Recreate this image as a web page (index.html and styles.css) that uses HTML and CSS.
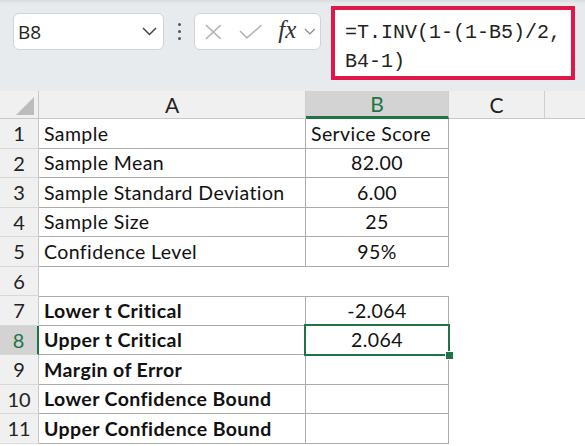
FILE: index.html
```html
<!DOCTYPE html>
<html lang="en">

<head>
    <meta charset="UTF-8">
    <meta name="viewport" content="width=device-width, initial-scale=1.0">
    <title>T.INV critical values</title>
    <link rel="stylesheet" href="styles.css">
</head>

<body>
    <div id="toolbar">
        <div id="name-box">
            <span>B8</span>
            <svg class="chev" width="15" height="9" viewBox="0 0 15 9"><path d="M1 1 L7.5 7.5 L14 1" fill="none" stroke="#444" stroke-width="1.5"/></svg>
        </div>
        <div id="dots"><i></i><i></i><i></i></div>
        <div id="fx-box">
            <svg width="18" height="16" viewBox="0 0 18 16"><path d="M1 1 L16 15 M16 1 L1 15" stroke="#b5b5b5" stroke-width="1.5" fill="none"/></svg>
            <svg width="24" height="15" viewBox="0 0 24 15"><path d="M1 7 L8 14 L23 1" stroke="#b5b5b5" stroke-width="1.5" fill="none"/></svg>
            <span class="fx">fx</span>
            <svg width="12" height="7" viewBox="0 0 12 7"><path d="M1 1 L6 6 L11 1" fill="none" stroke="#888" stroke-width="1.3"/></svg>
        </div>
        <div id="formula">=T.INV(1-(1-B5)/2,<br>B4-1)</div>
    </div>

    <div id="sheet">
        <div class="corner"><div class="tri"></div></div>
        <div class="ch">A</div>
        <div class="ch sel">B</div>
        <div class="ch">C</div>
        <div class="ch last"></div>

        <div class="rh">1</div>
        <div class="cell">Sample</div>
        <div class="cell">Service Score</div>
        <div class="blank"></div><div class="blank"></div>

        <div class="rh">2</div>
        <div class="cell">Sample Mean</div>
        <div class="cell num">82.00</div>
        <div class="blank"></div><div class="blank"></div>

        <div class="rh">3</div>
        <div class="cell">Sample Standard Deviation</div>
        <div class="cell num">6.00</div>
        <div class="blank"></div><div class="blank"></div>

        <div class="rh">4</div>
        <div class="cell">Sample Size</div>
        <div class="cell num">25</div>
        <div class="blank"></div><div class="blank"></div>

        <div class="rh">5</div>
        <div class="cell">Confidence Level</div>
        <div class="cell num">95%</div>
        <div class="blank"></div><div class="blank"></div>

        <div class="rh">6</div>
        <div class="blank"></div><div class="blank"></div>
        <div class="blank"></div><div class="blank"></div>

        <div class="rh">7</div>
        <div class="cell top bold">Lower t Critical</div>
        <div class="cell top num">-2.064</div>
        <div class="blank"></div><div class="blank"></div>

        <div class="rh sel">8</div>
        <div class="cell bold">Upper t Critical</div>
        <div class="cell num active">2.064<span class="frame"></span><span class="handle"></span></div>
        <div class="blank"></div><div class="blank"></div>

        <div class="rh">9</div>
        <div class="cell bold">Margin of Error</div>
        <div class="cell"></div>
        <div class="blank"></div><div class="blank"></div>

        <div class="rh">10</div>
        <div class="cell bold">Lower Confidence Bound</div>
        <div class="cell"></div>
        <div class="blank"></div><div class="blank"></div>

        <div class="rh">11</div>
        <div class="cell bold">Upper Confidence Bound</div>
        <div class="cell"></div>
        <div class="blank"></div><div class="blank"></div>
    </div>
</body>

</html>
```

FILE: styles.css
```css
html, body {
    margin: 0;
    padding: 0;
    background: #fff;
    overflow: hidden;
}

body {
    width: 585px;
    height: 446px;
    font-family: "Lato", "Open Sans", sans-serif;
    color: #111;
}

#toolbar {
    height: 91px;
    box-sizing: border-box;
    background: linear-gradient(#d9dcdf 0px, #e8ebee 4px, #e8ebee 100%);
    display: flex;
    align-items: flex-start;
    position: relative;
}

#name-box {
    margin: 13px 0 0 13px;
    width: 151px;
    height: 37px;
    box-sizing: border-box;
    background: #fff;
    border: 1px solid #d3d3d3;
    border-radius: 6px;
    display: flex;
    align-items: center;
    justify-content: space-between;
    padding: 0 6px 0 4px;
    font-family: "Open Sans", sans-serif;
    font-size: 19px;
    color: #222;
}

#dots {
    margin: 23px 0 0 14px;
    display: flex;
    flex-direction: column;
    gap: 4px;
}

#dots i {
    width: 3px;
    height: 3px;
    border-radius: 50%;
    background: #555;
}

#fx-box {
    margin: 13px 0 0 13px;
    width: 127px;
    height: 37px;
    box-sizing: border-box;
    background: #fff;
    border: 1px solid #d3d3d3;
    border-radius: 6px;
    display: flex;
    align-items: center;
    padding: 0 4px 0 10px;
    gap: 16px;
}

#fx-box svg:last-child {
    margin-left: -8px;
}

.fx {
    font-family: "Liberation Serif", serif;
    font-style: italic;
    font-size: 25px;
    color: #333;
    margin-top: -4px;
}

#formula {
    margin: 6px 0 0 10px;
    width: 244px;
    height: 74px;
    box-sizing: border-box;
    background: #fff;
    border: 4px solid #e0184a;
    padding: 8px 0 0 10px;
    font-family: "Liberation Mono", monospace;
    font-size: 20px;
    line-height: 29px;
    color: #222;
    white-space: nowrap;
}

#sheet {
    display: grid;
    grid-template-columns: 39px 267px 143px 96px 1fr;
    grid-template-rows: 28px repeat(11, 29.5px);
    font-size: 19.5px;
    letter-spacing: 0.4px;
}

.corner {
    background: #f0f0f0;
    border-right: 1px solid #c8c8c8;
    border-bottom: 1px solid #c8c8c8;
    display: flex;
    justify-content: flex-end;
    align-items: flex-end;
    padding: 0 4px 3px 0;
}

.tri {
    width: 18px;
    height: 18px;
    background: #bcbcbc;
    clip-path: polygon(100% 0, 100% 100%, 0 100%);
}

.ch {
    background: #f0f0f0;
    border-right: 1px solid #cfcfcf;
    border-bottom: 1px solid #c8c8c8;
    display: flex;
    align-items: center;
    justify-content: center;
    font-size: 21px;
    letter-spacing: 0;
    color: #222;
}

.ch.sel {
    background: #d3d3d3;
    color: #217346;
    border-bottom: 3px solid #217346;
}

.ch.last {
    border-right: none;
}

.rh {
    background: #f0f0f0;
    border-right: 1px solid #c8c8c8;
    border-bottom: 1px solid #d8d8d8;
    display: flex;
    align-items: center;
    justify-content: center;
    font-size: 20px;
    letter-spacing: 0;
    color: #222;
}

.rh.sel {
    background: #d3d3d3;
    color: #217346;
    border-right: 2px solid #217346;
}

.cell {
    border-right: 1px solid #ababab;
    border-bottom: 1px solid #ababab;
    display: flex;
    align-items: center;
    padding-left: 5px;
    white-space: nowrap;
    position: relative;
}

.cell.top {
    border-top: 1px solid #ababab;
}

.cell.num {
    justify-content: center;
    padding-left: 0;
}

.bold {
    font-weight: bold;
}

.frame {
    position: absolute;
    left: -2px;
    top: -2px;
    right: -2px;
    bottom: -2px;
    border: 2px solid #217346;
    z-index: 2;
}

.handle {
    position: absolute;
    right: -6px;
    bottom: -6px;
    width: 7px;
    height: 7px;
    background: #217346;
    border: 1px solid #fff;
    z-index: 3;
}
```
